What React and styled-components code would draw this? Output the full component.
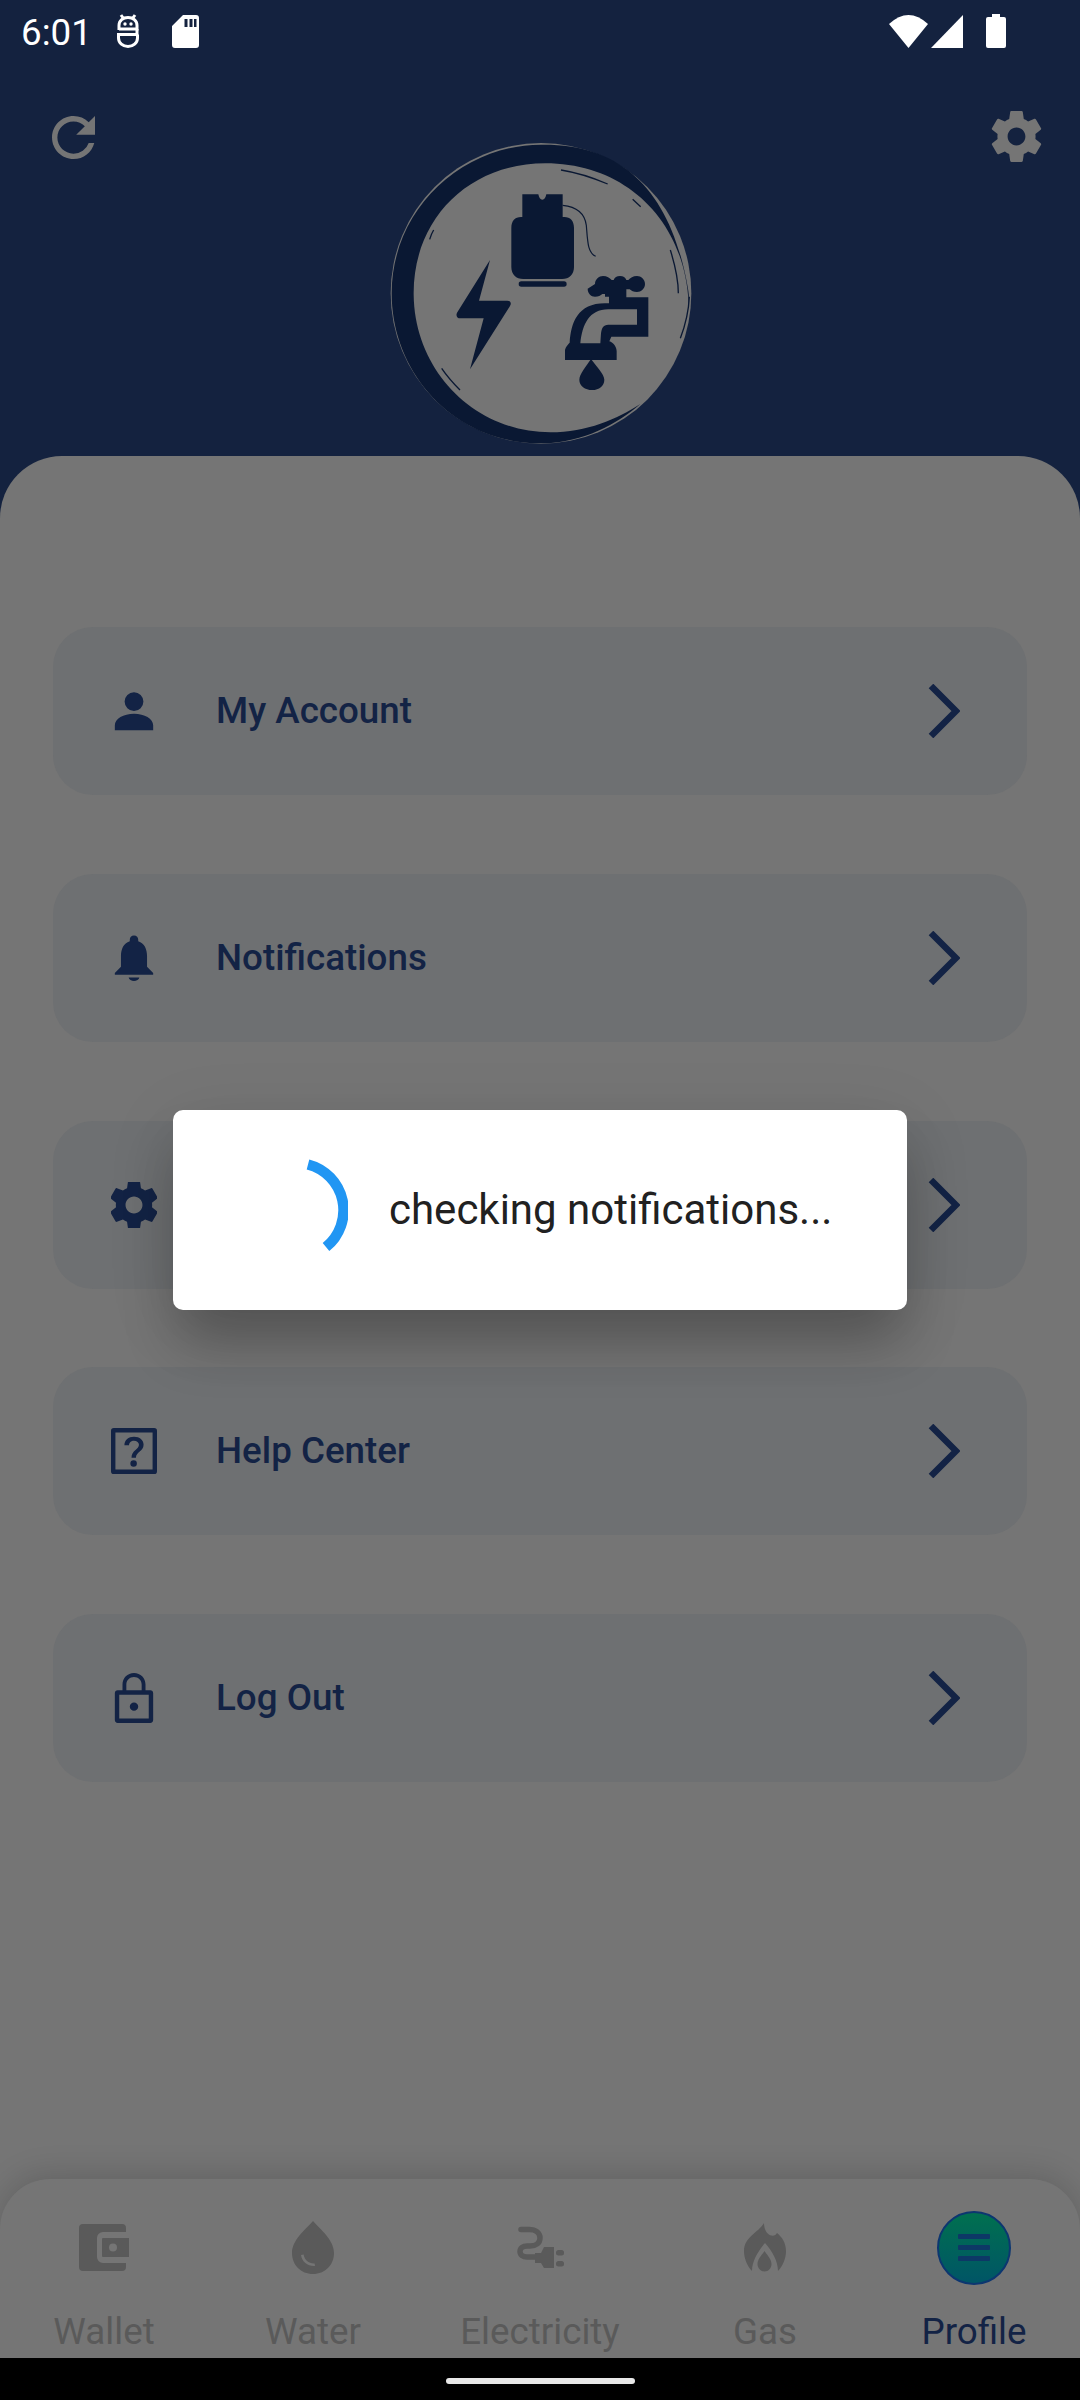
import React from "react";
import styled, { createGlobalStyle } from "styled-components";

const NAVY = "#14223f";
const INK = "#132345";
const DARK = "#0a1833";
const DIM = "#757575";
const MUTED = "#5a5a5a";

const Global = createGlobalStyle`
  html, body { margin: 0; padding: 0; background: #000; }
  * { box-sizing: border-box; }
  body { font-family: Roboto, "Liberation Sans", sans-serif; }
`;

const Screen = styled.div`
  position: relative;
  width: 1080px;
  height: 2400px;
  overflow: hidden;
  display: flex;
  flex-direction: column;
  background: ${NAVY};
`;

const Header = styled.header`
  height: 456px;
  flex: none;
  display: flex;
  flex-direction: column;
`;

const StatusBar = styled.div`
  height: 62px;
  flex: none;
  padding: 12px 74px 0 21px;
  display: flex;
  align-items: flex-start;
  justify-content: space-between;
  color: #fff;
`;

const StatusLeft = styled.div`
  display: flex;
  align-items: center;
`;

const StatusGlyphs = styled.div`
  display: flex;
  align-items: center;
  gap: 32px;
  margin-bottom: 4px;
`;

const StatusRightGroup = styled.div`
  display: flex;
  align-items: center;
  gap: 3px;
  margin-top: 2px;
`;

const BatteryGap = styled.span`
  width: 17px;
`;

const Clock = styled.span`
  font-size: 36.75px;
  line-height: 42px;
  margin-right: 24px;
`;

const HeaderRow = styled.div`
  padding: 44px 33px 0 52px;
  display: flex;
  justify-content: space-between;
  align-items: flex-start;
`;

const HeaderIcon = styled.svg`
  display: block;
  flex: none;
  fill: ${DIM};
  margin-top: ${(p) => p.$top || 0}px;
`;

const LogoWrap = styled.div`
  margin-top: 24px;
  width: 340px;
  height: 330px;
`;

const Sheet = styled.main`
  flex: 1;
  min-height: 0;
  display: flex;
  flex-direction: column;
  background: ${DIM};
  border-radius: 62px 62px 0 0;
`;

const Menu = styled.div`
  flex: 1;
  padding: 171px 53px 0 53px;
  display: flex;
  flex-direction: column;
  gap: 78.75px;
`;

const Card = styled.div`
  height: 168px;
  flex: none;
  display: flex;
  align-items: center;
  border-radius: 40px;
  background: #6e7072;
  padding: 0 67px 0 58px;
  color: ${INK};
`;

const CardIcon = styled.svg`
  width: 46px;
  height: ${(p) => p.$h || 46}px;
  flex: none;
  fill: ${INK};
`;

const CardLabel = styled.span`
  flex: 1;
  margin-left: 59px;
  font-size: 36.75px;
  font-weight: 500;
  line-height: 44px;
`;

const Chevron = styled.svg`
  width: 32px;
  height: 54px;
  flex: none;
  fill: none;
  stroke: ${INK};
  stroke-width: 6.5;
`;

const BottomNav = styled.nav`
  height: 179px;
  flex: none;
  display: grid;
  grid-template-columns: 208px 210px 244px 206px 212px;
  background: ${DIM};
  border-radius: 50px 50px 0 0;
  box-shadow: 0 -4px 32px rgba(0, 0, 0, 0.16);
  overflow: hidden;
`;

const NavItem = styled.div`
  height: 179px;
  display: flex;
  flex-direction: column;
  align-items: center;
  color: ${(p) => (p.$active ? INK : MUTED)};
`;

const NavIconSlot = styled.div`
  height: 73px;
  margin-top: 32px;
  display: flex;
  align-items: center;
  justify-content: center;
`;

const NavGlyph = styled.svg`
  display: block;
  fill: ${MUTED};
`;

const ActiveDisc = styled.div`
  width: 74px;
  height: 74px;
  border-radius: 50%;
  border: 2.5px solid #0c3670;
  background: linear-gradient(180deg, #00704f, #005566);
  display: flex;
  flex-direction: column;
  align-items: center;
  justify-content: center;
  gap: 6.5px;
`;

const DiscBar = styled.span`
  display: block;
  width: 32px;
  height: 4.5px;
  background: #0d3866;
  border-radius: 1px;
`;

const NavLabel = styled.span`
  margin-top: 26px;
  font-size: 36.75px;
  line-height: 44px;
  white-space: nowrap;
`;

const SystemBar = styled.div`
  height: 42px;
  flex: none;
  background: #000;
  display: flex;
  justify-content: center;
  padding-top: 20px;
`;

const HomePill = styled.span`
  display: block;
  width: 189px;
  height: 6px;
  border-radius: 3px;
  background: #e8e8e8;
`;

const Overlay = styled.div`
  position: absolute;
  inset: 0;
  padding-top: 20px;
  display: flex;
  align-items: center;
  justify-content: center;
`;

const Dialog = styled.div`
  width: 734px;
  height: 200px;
  background: #fff;
  border-radius: 10px;
  display: flex;
  align-items: center;
  padding-left: 70px;
  box-shadow: 0 38px 56px -6px rgba(0, 0, 0, 0.24), 0 14px 70px rgba(0, 0, 0, 0.1);
`;

const Spinner = styled.svg`
  width: 105px;
  height: 105px;
  flex: none;
  fill: none;
  stroke: #2196f3;
  stroke-width: 10.5;
`;

const DialogText = styled.span`
  margin-left: 41px;
  font-size: 42px;
  line-height: 50px;
  color: #212121;
  white-space: nowrap;
`;

const SdCard = () => (
  <svg width="27" height="33" viewBox="0 0 27 33" fill="#fff">
    <path fillRule="evenodd" d="M11 0h13a3 3 0 0 1 3 3v27a3 3 0 0 1-3 3H3a3 3 0 0 1-3-3V11zM12.500 4v8h3V4zM17.500 4v8h3V4zM22 4v8h2.500V4z" />
  </svg>
);

const GlyphS = () => (
  <svg width="24" height="34" viewBox="0 0 24 34" fill="none" stroke="#fff" strokeWidth="3">
    <path d="M5 1l2.500 3.500M19 1l-2.500 3.500" />
    <path d="M3 16v-4.500C3 6.500 7 3.500 12 3.500s9 3 9 8V15H3" />
    <path d="M21 15v5.500H2.500V24c0 5 4.500 8.500 9.500 8.500s9.500-3.500 9.500-8.500v-3.500" />
    <circle cx="9" cy="10" r="1.700" fill="#fff" stroke="none" />
    <circle cx="15" cy="10" r="1.700" fill="#fff" stroke="none" />
  </svg>
);

const StatusRight = () => (
  <StatusRightGroup>
    <svg width="39" height="33" viewBox="0 0 39 33" fill="#fff">
      <path d="M19.500 33L0 9Q19.500-9 39 9z" />
    </svg>
    <svg width="32" height="33" viewBox="0 0 32 33" fill="#fff">
      <path d="M32 0v33H0z" />
    </svg>
    <BatteryGap />
    <svg width="20" height="34" viewBox="0 0 20 34" fill="#fff">
      <path d="M6 0h8v3h4a2 2 0 0 1 2 2v27a2 2 0 0 1-2 2H2a2 2 0 0 1-2-2V5a2 2 0 0 1 2-2h4z" />
    </svg>
  </StatusRightGroup>
);

const Logo = () => (
  <svg width="340" height="330" viewBox="0 0 1020 990">
    <circle cx="510" cy="490" r="451" fill={DIM} />
    <path
      fill={DARK}
      d="M510 44C760 40 900 190 950 470c6 30 4 60 3 50-12-250-190-420-430-420C290 100 125 270 128 495c3 230 185 412 410 412 110 0 200-40 270-85-70 60-170 115-290 118C250 945 62 730 62 490 62 240 270 44 510 44z"
    />
    <path fill="none" stroke={DARK} strokeWidth="4" d="M570 120c50 8 100 25 140 42M785 208l24 22M898 360c14 45 24 90 24 130M955 500c-2 45-12 85-27 125M212 715c15 22 35 45 55 65M176 328c3-10 7-20 12-28" />
    <path fill={DARK} d="M454 193h48c2 10 6 16 12 16s10-6 12-16h49v68h5c18 0 29 12 29 32v118c0 22-14 36-36 36H457c-22 0-36-14-36-36V293c0-20 11-32 29-32h4z" />
    <rect x="443" y="454" width="144" height="16" rx="8" fill={DARK} />
    <path fill="none" stroke={DARK} strokeWidth="3.500" d="M575 226c40 4 66 22 71 60 4 50 4 82 28 93" />
    <path fill={DARK} d="M357 390L258 548c-4 9 0 17 10 17h70L297 718l120-190c5-8 2-16-8-16h-85z" />
    <path
      fill={DARK}
      d="M672 462c0-14 12-24 24-24 12 0 20 6 26 12h6c3-8 9-12 19-12s16 4 19 12h6c6-6 14-12 26-12 12 0 24 10 24 24s-12 24-24 24c-10 0-17-3-22-8h-10v24h66v118H721l-6 14c12 4 22 16 22 30v26H582v-28c0-8 8-18 14-24 4-60 24-118 106-118h12v-20h-12v-8h-8c-5 5-12 8-22 8-12 0-22-10-22-24z"
    />
    <path fill={DIM} d="M628 640c6-56 26-102 84-102h86v46H712c-16 0-20 12-22 26l-2 30z" />
    <path fill={DARK} d="M660 687c14 20 40 46 40 62 0 18-16 31-36 31-22 0-39-13-39-31 0-16 22-42 35-62z" />
  </svg>
);

const GearPath = "M19.430 12.980c.04-.32.07-.64.07-.98s-.03-.66-.07-.98l2.110-1.650c.19-.15.24-.42.12-.64l-2-3.460c-.12-.22-.39-.3-.61-.22l-2.490 1c-.52-.4-1.080-.73-1.690-.98l-.38-2.650A.488.488 0 0 0 14 2h-4c-.25 0-.46.18-.49.42l-.38 2.650c-.61.25-1.170.59-1.690.98l-2.490-1c-.23-.09-.49 0-.61.22l-2 3.460c-.13.22-.07.49.12.64l2.110 1.650c-.04.32-.07.65-.07.98s.03.66.07.98l-2.110 1.650c-.19.15-.24.42-.12.64l2 3.460c.12.22.39.3.61.22l2.490-1c.52.4 1.080.73 1.690.98l.38 2.650c.03.24.24.42.49.42h4c.25 0 .46-.18.49-.42l.38-2.650c.61-.25 1.170-.59 1.690-.98l2.490 1c.23.09.49 0 .61-.22l2-3.460c.12-.22.07-.49-.12-.64l-2.110-1.650zM12 15.500c-1.930 0-3.500-1.570-3.500-3.500s1.570-3.500 3.500-3.500 3.500 1.570 3.500 3.500-1.570 3.500-3.500 3.500z";

const icons = {
  person: <path d="M12 4.200a4.900 4.900 0 1 1 0 9.800 4.900 4.900 0 0 1 0-9.800zM2 24v-2.600C2 18 6.500 15.400 12 15.400s10 2.600 10 6V24z" />,
  bell: <path d="M12 23.500c1.300 0 2.600-.7 2.800-1.800H9.200c.2 1.100 1.500 1.800 2.800 1.800zM18.800 16v-5.500c0-3.700-1.300-6.700-4.600-7.800V2c0-1.400-.8-2.300-2.200-2.300S9.800.6 9.800 2v.7C6.500 3.800 5.200 6.800 5.200 10.500V16L2 19.300v.9h20v-.9z" />,
  gear: <path d={GearPath} />,
  help: <path fillRule="evenodd" d="M1.500 0h21A1.500 1.500 0 0 1 24 1.500v21a1.500 1.500 0 0 1-1.500 1.500h-21A1.500 1.500 0 0 1 0 22.500v-21A1.500 1.500 0 0 1 1.500 0zM2.300 2.300v19.400h19.400V2.300zM12 4.500c3 0 5 1.700 5 4.200 0 3.500-4 3.700-4 6.800h-2.300c0-4 3.900-4.300 3.900-6.800 0-1.200-1.100-2.100-2.600-2.100s-2.600 1-2.600 2.400H7c0-2.700 2.100-4.500 5-4.500zM11.800 16.800a1.700 1.700 0 1 1 0 3.400 1.700 1.700 0 0 1 0-3.400z" />,
  lock: <path fillRule="evenodd" d="M12 0c3.400 0 6 2.600 6 6v3h2.500C21.400 9 22 9.600 22 10.500V24.500c0 .9-.6 1.500-1.500 1.500h-17C2.600 26 2 25.400 2 24.500V10.500C2 9.600 2.600 9 3.500 9H6V6c0-3.400 2.600-6 6-6zM8 6v3h8V6c0-2.300-1.700-4-4-4S8 3.700 8 6zM4.300 11.300v12.400h15.400V11.300zM12 15.300a2.200 2.200 0 1 1 0 4.400 2.200 2.200 0 0 1 0-4.400z" />,
};

const items = [
  { id: "person", label: "My Account", box: "0 2 24 24" },
  { id: "bell", label: "Notifications", box: "0 -0.500 24 24" },
  { id: "gear", label: "Settings", box: "2.500 2.500 19 19" },
  { id: "help", label: "Help Center", box: "0 0 24 24" },
  { id: "lock", label: "Log Out", box: "0 0 24 26", h: 50 },
];

const ChevronMark = () => (
  <Chevron viewBox="0 0 32 54">
    <path d="M3 2l25 25L3 52" />
  </Chevron>
);

const WalletIcon = () => (
  <NavGlyph width="50" height="47" viewBox="0 0 50 47">
    <path d="M4 0h39a4 4 0 0 1 4 4v4H24a6 6 0 0 0-6 6v19a6 6 0 0 0 6 6h23v4a4 4 0 0 1-4 4H4a4 4 0 0 1-4-4V4a4 4 0 0 1 4-4z" />
    <path fillRule="evenodd" d="M24 14h26v19H24a1 1 0 0 1-1-1V15a1 1 0 0 1 1-1zM34 19.500a4 4 0 1 0 0 8 4 4 0 0 0 0-8z" />
  </NavGlyph>
);

const DropIcon = () => (
  <NavGlyph width="42" height="53" viewBox="0 0 42 53">
    <path fillRule="evenodd" d="M21 0c8 9 21 19 21 32 0 12-9 21-21 21S0 44 0 32C0 19 13 9 21 0zM9 34c1 7 7 11.500 14 11l-.4-2.600c-5.500.4-10-3-11-8.900z" />
  </NavGlyph>
);

const PlugIcon = () => (
  <NavGlyph width="47" height="44" viewBox="0 0 47 44">
    <path fill="none" stroke={MUTED} strokeWidth="5.500" strokeLinecap="round" d="M4 3.500h8c7 0 11 3.500 11 8.500s-4 8-10 8h-3c-4 0-7 2-7 5.500S6 31 10 31h8" />
    <path d="M18 27h6l3-6h10v21H27l-3-5h-6z" />
    <rect x="39" y="24" width="8" height="5.500" rx="2.500" />
    <rect x="39" y="35" width="8" height="5.500" rx="2.500" />
  </NavGlyph>
);

const FlameIcon = () => (
  <NavGlyph width="42" height="49" viewBox="0 0 42 49">
    <path d="M20 0c0 5 2 11 7 12.500 3 .5 5-.5 6-2.500 5 4 9 10 9 18 0 7-3 15-8 20 0-10-6-20-13-28C14 28 8 38 8 48 3 43 0 35 0 28 0 14 14 10 20 0z" />
    <path d="M20.500 28c2.500 4 7 8 7 13 0 4-3 7.500-7 7.500s-7-3.500-7-7.500c0-5 4.500-9 7-13z" />
  </NavGlyph>
);

const navItems = [
  { label: "Wallet", icon: <WalletIcon /> },
  { label: "Water", icon: <DropIcon /> },
  { label: "Electricity", icon: <PlugIcon /> },
  { label: "Gas", icon: <FlameIcon /> },
];

export default function App() {
  return (
    <>
      <Global />
      <Screen>
        <Header>
          <StatusBar>
            <StatusLeft>
              <Clock>6:01</Clock>
              <StatusGlyphs>
                <GlyphS />
                <SdCard />
              </StatusGlyphs>
            </StatusLeft>
            <StatusRight />
          </StatusBar>
          <HeaderRow>
            <HeaderIcon $top={10} width="43" height="43" viewBox="4 4 16 16">
              <path d="M17.650 6.350A7.958 7.958 0 0 0 12 4c-4.420 0-7.990 3.580-7.990 8s3.570 8 7.990 8c3.730 0 6.840-2.550 7.730-6h-2.080A5.990 5.990 0 0 1 12 18c-3.310 0-6-2.690-6-6s2.690-6 6-6c1.660 0 3.140.69 4.220 1.780L13 11h7V4z" />
            </HeaderIcon>
            <LogoWrap>
              <Logo />
            </LogoWrap>
            <HeaderIcon width="61" height="61" viewBox="0 0 24 24">
              <path d={GearPath} />
            </HeaderIcon>
          </HeaderRow>
        </Header>
        <Sheet>
          <Menu>
            {items.map((it) => (
              <Card key={it.id}>
                <CardIcon viewBox={it.box} $h={it.h}>{icons[it.id]}</CardIcon>
                <CardLabel>{it.label}</CardLabel>
                <ChevronMark />
              </Card>
            ))}
          </Menu>
          <BottomNav>
            {navItems.map((n) => (
              <NavItem key={n.label}>
                <NavIconSlot>{n.icon}</NavIconSlot>
                <NavLabel>{n.label}</NavLabel>
              </NavItem>
            ))}
            <NavItem $active>
              <NavIconSlot>
                <ActiveDisc>
                  <DiscBar />
                  <DiscBar />
                  <DiscBar />
                </ActiveDisc>
              </NavIconSlot>
              <NavLabel>Profile</NavLabel>
            </NavItem>
          </BottomNav>
        </Sheet>
        <SystemBar>
          <HomePill />
        </SystemBar>
        <Overlay>
          <Dialog>
            <Spinner viewBox="0 0 105 105">
              <path d="M65 6.500A47.250 47.250 0 0 1 83 89" />
            </Spinner>
            <DialogText>checking notifications...</DialogText>
          </Dialog>
        </Overlay>
      </Screen>
    </>
  );
}
